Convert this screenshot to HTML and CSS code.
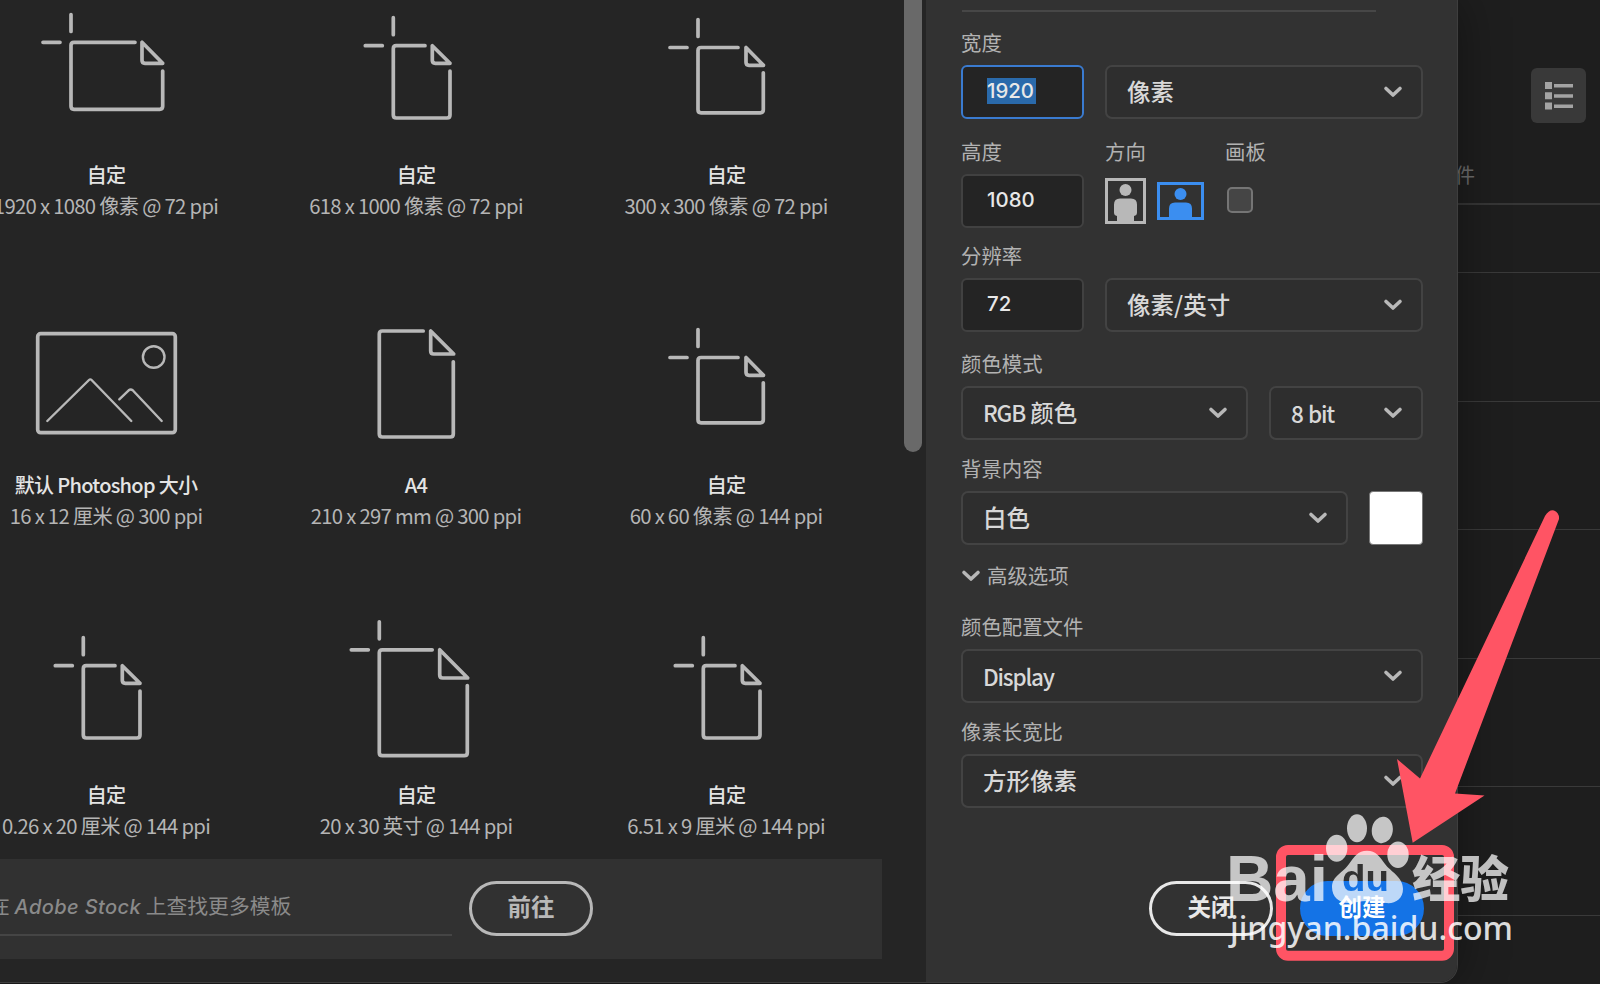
FILE: index.html
```html
<!DOCTYPE html>
<html lang="zh-CN">
<head>
  <meta charset="utf-8">
  <title>新建文档</title>
  <link rel="stylesheet" href="styles.css">
</head>
<body>
  <!-- Shared icons -->
  <svg class="symbols">
    <symbol id="chevron" viewBox="0 0 20 14">
      <path d="M3 3.5 L10 10 L17 3.5" />
    </symbol>
    <symbol id="doc-wide" viewBox="0 0 200 160">
      <path d="M65 20.5V37.5M37 48.3H54M129 48.3H68q-3 0-3 3V112.300q0 3 3 3H153.700q3 0 3-3V77M136 48.300V66.300q0 3 3 3H156.700Z" />
    </symbol>
    <symbol id="doc-tall" viewBox="0 0 200 160">
      <path d="M77.300 23.700V40.700M49.300 51.700H66.300M109 51.700H80.300q-3 0-3 3V121q0 3 3 3H131q3 0 3-3V77M116.300 51.700V66.300q0 3 3 3H134Z" />
    </symbol>
    <symbol id="doc-square" viewBox="0 0 200 160">
      <path d="M72 25.500V42.500M44 53.500H61M112 53.500H75q-3 0-3 3V115.800q0 3 3 3H134.300q3 0 3-3V78.800M120 53.500V68.300q0 3 3 3H137.500Z" />
    </symbol>
    <symbol id="doc-a4" viewBox="0 0 200 160">
      <path d="M107.200 27H66.300q-3 0-3 3V130q0 3 3 3H134.300q3 0 3-3V57.800M114.700 27V47q0 3 3 3H137.700Z" />
    </symbol>
    <symbol id="doc-large" viewBox="0 0 200 160">
      <path d="M63.300 7.800V24.800M35.300 35.800H52.300M116.200 35.800H66.300q-3 0-3 3V138.700q0 3 3 3H148.300q3 0 3-3V71.500M123.700 35.800V61q0 3 3 3H151.700Z" />
    </symbol>
    <symbol id="photo" viewBox="0 0 200 160">
      <rect x="31.700" y="29.700" width="137.600" height="99" rx="3" />
      <g class="thin">
        <circle cx="147.700" cy="53" r="10.800" />
        <path d="M41.300 117L83 76q1.300-1.300 2.600 0L125.300 117M113.300 95.300L122.700 86.300q2-1.600 4 0L155.700 117" />
      </g>
    </symbol>
  </svg>

  <div class="app">
    <!-- Recent file list behind the dialog -->
    <div class="recent">
      <div class="recent-tools">
        <button class="list-view">
          <svg width="28" height="28" viewBox="0 0 28 28">
            <path d="M0 0h7v7H0zM9 2h19v3.500H9zM0 10.300h7v7H0zM9 12.200h19v3.500H9zM0 20.600h7v7H0zM9 22.500h19v3.500H9z" />
          </svg>
        </button>
      </div>
      <div class="recent-head">件</div>
      <div class="recent-row short"></div>
      <div class="recent-row"></div>
      <div class="recent-row"></div>
      <div class="recent-row"></div>
      <div class="recent-row"></div>
      <div class="recent-row"></div>
    </div>

    <div class="dialog">
      <!-- Presets -->
      <div class="presets">
        <div class="preset-grid">
          <div class="preset">
            <svg class="preset-icon"><use href="#doc-wide" /></svg>
            <h3>自定</h3>
            <p>1920 x 1080 像素 @ 72 ppi</p>
          </div>
          <div class="preset">
            <svg class="preset-icon"><use href="#doc-tall" /></svg>
            <h3>自定</h3>
            <p>618 x 1000 像素 @ 72 ppi</p>
          </div>
          <div class="preset">
            <svg class="preset-icon"><use href="#doc-square" /></svg>
            <h3>自定</h3>
            <p>300 x 300 像素 @ 72 ppi</p>
          </div>
          <div class="preset">
            <svg class="preset-icon"><use href="#photo" /></svg>
            <h3>默认 Photoshop 大小</h3>
            <p>16 x 12 厘米 @ 300 ppi</p>
          </div>
          <div class="preset">
            <svg class="preset-icon"><use href="#doc-a4" /></svg>
            <h3>A4</h3>
            <p>210 x 297 mm @ 300 ppi</p>
          </div>
          <div class="preset">
            <svg class="preset-icon"><use href="#doc-square" /></svg>
            <h3>自定</h3>
            <p>60 x 60 像素 @ 144 ppi</p>
          </div>
          <div class="preset">
            <svg class="preset-icon"><use href="#doc-tall" /></svg>
            <h3>自定</h3>
            <p>0.26 x 20 厘米 @ 144 ppi</p>
          </div>
          <div class="preset">
            <svg class="preset-icon"><use href="#doc-large" /></svg>
            <h3>自定</h3>
            <p>20 x 30 英寸 @ 144 ppi</p>
          </div>
          <div class="preset">
            <svg class="preset-icon"><use href="#doc-tall" /></svg>
            <h3>自定</h3>
            <p>6.51 x 9 厘米 @ 144 ppi</p>
          </div>
        </div>
        <div class="stock">
          <div class="stock-search">在 <i>Adobe Stock</i> 上查找更多模板</div>
          <button class="pill pill-go">前往</button>
        </div>
        <div class="scrollbar"></div>
      </div>

      <!-- Document settings -->
      <div class="settings">
        <div class="name-line"></div>
        <div class="field">
          <label>宽度</label>
          <div class="controls">
            <div class="input focused"><span>1920</span></div>
            <div class="select">像素<svg class="chevron"><use href="#chevron" /></svg></div>
          </div>
        </div>
        <div class="field columns gap-l">
          <div class="col-height">
            <label>高度</label>
            <div class="input"><span>1080</span></div>
          </div>
          <div class="col-direction">
            <label>方向</label>
            <div class="orientation">
              <svg width="41" height="46" viewBox="0 0 41 46">
                <rect x="1.500" y="1.500" width="38" height="43" fill="none" stroke="#b8b8b8" stroke-width="3" />
                <circle cx="20.500" cy="12" r="6" fill="#b8b8b8" />
                <path d="M15 20.500h11q6 0 6 6v8q0 3-3 3.500V45H12v-7q-3-.5-3-3.500v-8q0-6 6-6z" fill="#b8b8b8" />
              </svg>
              <svg width="47" height="38" viewBox="0 0 47 38">
                <rect x="1.500" y="1.500" width="44" height="35" fill="none" stroke="#3b8ef0" stroke-width="3" />
                <circle cx="23.500" cy="12" r="6" fill="#3b8ef0" />
                <path d="M18 20.500h11q6 0 6 6V37H12V26.500q0-6 6-6z" fill="#3b8ef0" />
              </svg>
            </div>
          </div>
          <div>
            <label>画板</label>
            <div class="checkbox"></div>
          </div>
        </div>
        <div class="field gap-s">
          <label>分辨率</label>
          <div class="controls">
            <div class="input"><span>72</span></div>
            <div class="select">像素/英寸<svg class="chevron"><use href="#chevron" /></svg></div>
          </div>
        </div>
        <div class="field gap-m">
          <label>颜色模式</label>
          <div class="controls">
            <div class="select"><span><span class="latin">RGB</span> 颜色</span><svg class="chevron"><use href="#chevron" /></svg></div>
            <div class="select depth"><span class="latin">8 bit</span><svg class="chevron"><use href="#chevron" /></svg></div>
          </div>
        </div>
        <div class="field">
          <label>背景内容</label>
          <div class="controls">
            <div class="select">白色<svg class="chevron"><use href="#chevron" /></svg></div>
            <div class="swatch"></div>
          </div>
        </div>
        <div class="advanced"><svg class="chevron"><use href="#chevron" /></svg><span>高级选项</span></div>
        <div class="field">
          <label>颜色配置文件</label>
          <div class="controls">
            <div class="select"><span class="latin">Display</span><svg class="chevron"><use href="#chevron" /></svg></div>
          </div>
        </div>
        <div class="field">
          <label>像素长宽比</label>
          <div class="controls">
            <div class="select">方形像素<svg class="chevron"><use href="#chevron" /></svg></div>
          </div>
        </div>
        <div class="actions">
          <button class="pill pill-close">关闭</button>
          <button class="pill pill-create">创建</button>
        </div>
      </div>
    </div>

    <!-- Arrow, highlight box and watermark drawn over the dialog -->
    <svg class="overlay" width="400" height="484" viewBox="1200 500 400 484">
      <rect x="1281" y="850" width="168" height="105.700" rx="7" fill="none" stroke="#ff5464" stroke-width="10" />
      <path d="M1545 516Q1549 509.500 1554 510.500Q1559.500 513 1559 519L1455 793.500L1484.500 795.500L1412.700 842.700L1397 759L1420 778.500Z" fill="#ff5464" />
      <mask id="paw-mask" maskUnits="userSpaceOnUse" x="1320" y="840" width="100" height="70">
        <rect x="1320" y="840" width="100" height="70" fill="#fff" />
        <text class="wm-du" x="1342" y="891" textLength="47" lengthAdjust="spacingAndGlyphs">du</text>
      </mask>
      <g class="watermark">
        <text class="wm-bai" x="1226" y="901" textLength="102" lengthAdjust="spacingAndGlyphs">Bai</text>
        <ellipse cx="1336.700" cy="848.300" rx="10.700" ry="13.500" />
        <ellipse cx="1357" cy="828.300" rx="10" ry="14" />
        <ellipse cx="1382.300" cy="830" rx="10.500" ry="13.300" transform="rotate(8 1382.300 830)" />
        <ellipse cx="1398" cy="854.700" rx="10.700" ry="13.200" />
        <path mask="url(#paw-mask)" d="M1367 850.700C1376 850.700 1380 857 1385 864C1391 872 1403 877 1403 889C1403 899 1395 904 1386 903C1379 902 1374 901 1367 901C1360 901 1355 903 1349 903C1339 903 1332 897 1332 887C1332 876 1343 873 1349 864C1354 857 1358 850.700 1367 850.700Z" />
        <text class="wm-cn" x="1412" y="897" textLength="97" lengthAdjust="spacingAndGlyphs">经验</text>
        <text class="wm-url" x="1230" y="940" textLength="283" lengthAdjust="spacingAndGlyphs">jingyan.baidu.com</text>
      </g>
    </svg>
  </div>
</body>
</html>
```

FILE: styles.css
```css
* {
  box-sizing: border-box;
}
body {
  margin: 0;
  background-color: #1e1e1e;
  font-family: "Noto Sans CJK SC", sans-serif;
  overflow: hidden;
}
h3, p {
  margin: 0;
}
.symbols {
  display: none;
}
.app {
  display: grid;
  grid-template-columns: 1458px 142px;
  height: 984px;
  position: relative;
  overflow: hidden;
}

/* File list behind the dialog */
.recent {
  grid-column: 2;
  grid-row: 1;
}
.recent-tools {
  height: 123px;
  padding: 68px 14px 0 0;
  display: flex;
  justify-content: flex-end;
}
.list-view {
  width: 55px;
  height: 55px;
  padding: 0;
  border: none;
  border-radius: 6px;
  background-color: #393939;
  display: flex;
  align-items: center;
  justify-content: center;
}
.list-view svg {
  fill: #a3a3a3;
}
.recent-head {
  height: 82px;
  padding-top: 37px;
  margin-left: -3px;
  font-size: 20px;
  line-height: 30px;
  color: #6d6d6d;
  border-bottom: 2px solid #363636;
}
.recent-row {
  height: 128.500px;
  border-bottom: 1px solid #3a3a3a;
}
.recent-row.short {
  height: 68px;
}

/* Dialog */
.dialog {
  grid-column: 1;
  grid-row: 1;
  display: flex;
  z-index: 1;
  height: 983px;
  overflow: hidden;
  border-right: 1px solid #3e3e3e;
  border-bottom: 1px solid #3e3e3e;
  border-radius: 0 0 18px 0;
  box-shadow: 0 0 50px rgba(0, 0, 0, 0.4);
}
.presets {
  width: 926px;
  flex: none;
  background-color: #252525;
  position: relative;
  overflow: hidden;
}
.preset-grid {
  display: grid;
  grid-template-columns: repeat(3, 310px);
  grid-auto-rows: 310px;
  margin: -6px 0 0 -49px;
  height: 865px;
}
.preset {
  text-align: center;
  white-space: nowrap;
}
.preset-icon {
  display: block;
  width: 200px;
  height: 160px;
  margin: 0 auto 6px;
  fill: none;
  stroke: #b8b8b8;
  stroke-width: 3.700;
  stroke-linecap: round;
  stroke-linejoin: round;
}
.thin {
  stroke-width: 2.400;
}
.preset h3 {
  font-size: 20px;
  line-height: 30px;
  font-weight: 500;
  letter-spacing: -0.700px;
  color: #e4e4e4;
}
.preset p {
  font-size: 20.300px;
  line-height: 30px;
  letter-spacing: -0.700px;
  color: #b5b5b5;
}
.stock {
  width: 882px;
  height: 100px;
  background-color: #313131;
  display: flex;
  align-items: flex-start;
  padding-top: 22px;
}
.stock-search {
  width: 452px;
  height: 55px;
  margin-right: 17px;
  border-bottom: 2px solid #454545;
  font-size: 20.800px;
  line-height: 48px;
  color: #8a8a8a;
  text-indent: -11px;
  white-space: nowrap;
}
.stock-search i {
  font-family: Inter, sans-serif;
  font-size: 20px;
  font-weight: 500;
  letter-spacing: 0.400px;
}
.scrollbar {
  position: absolute;
  right: 4px;
  top: -10px;
  width: 18px;
  height: 462px;
  border-radius: 9px;
  background-color: #696969;
}

/* Pills */
.pill {
  width: 124px;
  height: 55px;
  padding: 0 0 3px;
  border: 3px solid #b8b8b8;
  border-radius: 28px;
  background-color: transparent;
  font-family: inherit;
  font-size: 23.500px;
  font-weight: 700;
  line-height: 1;
  color: #b8b8b8;
}
.pill-close {
  border-color: #e8e8e8;
  color: #e8e8e8;
}
.pill-create {
  border-color: #1473e6;
  background-color: #1473e6;
  color: #fff;
}

/* Settings panel */
.settings {
  flex: 1;
  padding: 10px 34px 0 35px;
  background-color: #323232;
}
.name-line {
  width: 414px;
  height: 2px;
  margin: 0 0 16px 1px;
  background-color: #474747;
}
.field {
  margin-bottom: 14px;
}
.gap-l {
  margin-top: 18px;
}
.gap-s {
  margin-top: 13px;
}
.gap-m {
  margin-top: 17px;
}
.field:has(+ .gap-l),
.field:has(+ .gap-s),
.field:has(+ .gap-m) {
  margin-bottom: 0;
}
.field label {
  display: block;
  height: 37px;
  font-size: 20.400px;
  line-height: 28px;
  color: #b2b2b2;
}
.controls {
  display: flex;
  gap: 21px;
}
.columns {
  display: flex;
}
.col-height {
  width: 144px;
}
.col-direction {
  width: 120px;
}
.input {
  width: 123px;
  height: 54px;
  padding: 11px 24px;
  border: 2px solid #414141;
  border-radius: 6px;
  background-color: #242424;
  font-family: Inter, sans-serif;
  font-size: 20.400px;
  font-weight: 500;
  line-height: 26px;
  color: #e8e8e8;
}
.input span {
  display: inline-block;
  margin-top: -1px;
}
.input.focused {
  border-color: #3a7bd0;
}
.input.focused span {
  padding-right: 2px;
  background-color: #2a6aab;
}
.select {
  flex: 1;
  display: flex;
  align-items: center;
  justify-content: space-between;
  height: 54px;
  padding: 0 18px 0 20px;
  border: 2px solid #434343;
  border-radius: 7px;
  background-color: #2e2e2e;
  font-size: 23.500px;
  font-weight: 500;
  line-height: 1;
  color: #d8d8d8;
}
.select.depth {
  flex: none;
  width: 154px;
}
.latin {
  font-size: 22.500px;
  letter-spacing: -1.200px;
  word-spacing: 1.500px;
}
.chevron {
  width: 20px;
  height: 14px;
  fill: none;
  stroke: #b8b8b8;
  stroke-width: 3.600;
  stroke-linecap: round;
  stroke-linejoin: round;
}
.orientation {
  display: flex;
  align-items: center;
  gap: 11px;
  padding-top: 4px;
}
.checkbox {
  width: 26px;
  height: 26px;
  margin: 13px 0 0 2px;
  border: 2px solid #757575;
  border-radius: 5px;
  background-color: #454545;
}
.swatch {
  width: 54px;
  height: 54px;
  border: 1px solid #777;
  border-radius: 4px;
  background-color: #fff;
}
.advanced {
  display: flex;
  align-items: center;
  gap: 6px;
  height: 30px;
  margin: 16px 0 21px;
  font-size: 20.400px;
  line-height: 28px;
  color: #b2b2b2;
}
.advanced span {
  padding-bottom: 2px;
}
.actions {
  display: flex;
  justify-content: flex-end;
  gap: 27px;
  margin: 73px -1px 0 0;
}

/* Overlay */
.overlay {
  position: absolute;
  right: 0;
  bottom: 0;
  z-index: 2;
}
.watermark {
  fill: #fff;
  fill-opacity: 0.72;
}
.wm-bai {
  font: 700 64px "Liberation Sans", sans-serif;
}
.wm-du {
  font: 700 36px "Liberation Sans", sans-serif;
  fill: #000;
  fill-opacity: 1;
}
.wm-cn {
  font: 900 49px "Noto Sans CJK SC", sans-serif;
}
.wm-url {
  font: 500 32px "Noto Sans", sans-serif;
  fill-opacity: 0.85;
}
```
